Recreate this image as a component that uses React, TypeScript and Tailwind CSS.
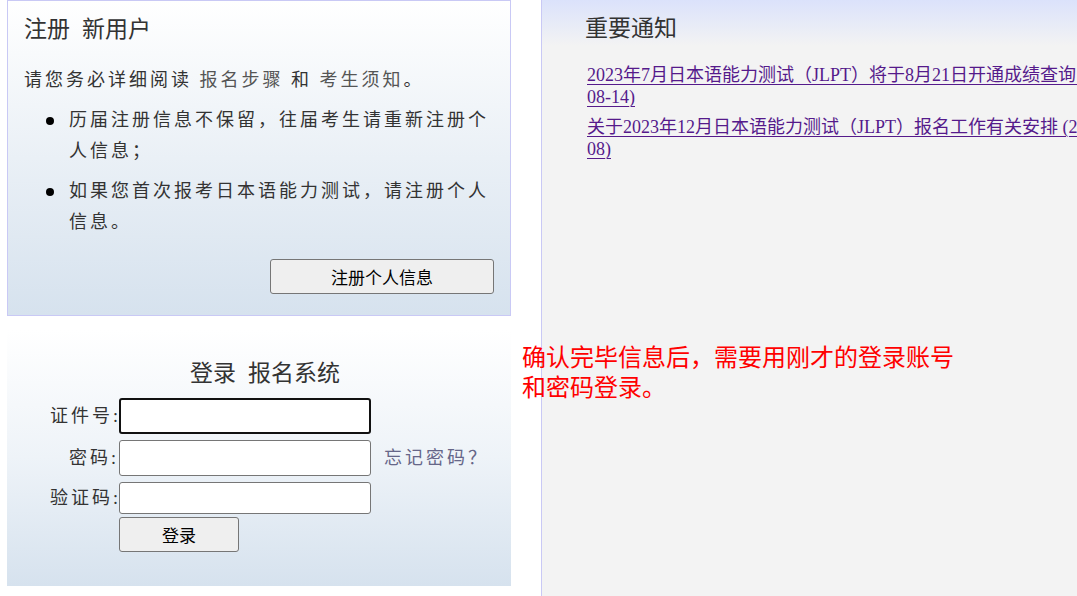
import React from 'react';

const sans = 'font-["Noto_Sans_CJK_SC","Noto_Sans",sans-serif]';
const serif = 'font-["Liberation_Serif","Noto_Sans_CJK_SC",serif]';

function Bullet({ children }: { children: React.ReactNode }) {
  return (
    <li className="flex">
      <span className="w-[45px] shrink-0">
        <span className="ml-[22px] mt-[12px] block h-[8px] w-[8px] rounded-full bg-black" />
      </span>
      <span>{children}</span>
    </li>
  );
}

function RegisterBox() {
  return (
    <div className="h-[316px] border border-[#c9c9f5] bg-gradient-to-b from-white via-[#eaf0f6] to-[#d6e2ee] px-4 pt-[11px]">
      <h2 className={`${sans} text-[23px] leading-[30px] text-[#333]`}>
        <span className="mr-[12px]">注册</span>新用户
      </h2>
      <p className={`${serif} mt-[23px] text-[18px] leading-[31px] tracking-[3px] text-[#333]`}>
        请您务必详细阅读 <a className="text-[#555]">报名步骤</a> 和 <a className="text-[#555]">考生须知</a>。
      </p>
      <ul className={`${serif} mt-[9px] space-y-[9px] text-[18px] leading-[31px] tracking-[3px] text-[#333]`}>
        <Bullet>历届注册信息不保留，往届考生请重新注册个人信息；</Bullet>
        <Bullet>如果您首次报考日本语能力测试，请注册个人信息。</Bullet>
      </ul>
      <div className="mt-[21px] flex justify-end">
        <button className={`${sans} h-[35px] w-[224px] rounded-[3px] border border-[#767676] bg-[#efefef] text-[17px] text-black`}>
          注册个人信息
        </button>
      </div>
    </div>
  );
}

function LoginBox() {
  const label = `${serif} w-[69px] shrink-0 whitespace-nowrap text-right text-[18px] tracking-[3px] text-[#333]`;
  return (
    <div className="mt-[14px] h-[256px] bg-gradient-to-b from-white via-[#eef3f8] to-[#d6e2ee] pl-[43px] pt-[26px]">
      <div className="w-[430px]">
        <h2 className={`${sans} text-center text-[23px] leading-[30px] text-[#333]`}>
          <span className="mr-[12px]">登录</span>报名系统
        </h2>
        <div className="mt-[12px] flex flex-col">
          <div className="flex h-[36px] items-center">
            <span className={label}>证件号:</span>
            <input className="h-[36px] w-[252px] shrink-0 rounded-[3px] border-2 border-[#111] bg-white outline-none" />
          </div>
          <div className="mt-[6px] flex h-[36px] items-center">
            <span className={label}>密码:</span>
            <input type="password" className="h-[36px] w-[252px] shrink-0 rounded-[3px] border border-[#767676] bg-white outline-none" />
            <a className={`${serif} ml-[13px] shrink-0 whitespace-nowrap text-[18px] tracking-[3px] text-[#666688]`}>忘记密码？</a>
          </div>
          <div className="mt-[6px] flex h-[32px] items-center">
            <span className={label}>验证码:</span>
            <input className="h-[32px] w-[252px] shrink-0 rounded-[3px] border border-[#767676] bg-white outline-none" />
          </div>
          <div className="mt-[3px] pl-[69px]">
            <button className={`${sans} h-[35px] w-[120px] rounded-[3px] border border-[#767676] bg-[#efefef] text-[17px] text-black`}>
              登录
            </button>
          </div>
        </div>
      </div>
    </div>
  );
}

function NoticePanel() {
  const link = `${serif} block text-[18px] leading-[22px] whitespace-nowrap text-[#551a8b] underline decoration-1 underline-offset-[3px]`;
  return (
    <div className="ml-[30px] w-[620px] shrink-0 border-l border-[#c9c9f5] bg-[#f3f3f3]">
      <div className="h-[46px] bg-gradient-to-b from-[#dbe2fb] to-[#f3f3f3] pl-[43px] pt-[11px]">
        <h2 className={`${sans} text-[23px] leading-[30px] text-[#333]`}>重要通知</h2>
      </div>
      <div className="mt-[18px] space-y-[8px] pl-[45px]">
        <a className={link}>
          2023年7月日本语能力测试（JLPT）将于8月21日开通成绩查询 (2023-
          <br />
          08-14)
        </a>
        <a className={link}>
          关于2023年12月日本语能力测试（JLPT）报名工作有关安排 (2023-08-
          <br />
          08)
        </a>
      </div>
    </div>
  );
}

export default function App() {
  return (
    <div className="relative h-[596px] w-[1077px] overflow-hidden bg-white">
      <div className="flex h-full">
        <div className="ml-[7px] w-[504px] shrink-0">
          <RegisterBox />
          <LoginBox />
        </div>
        <NoticePanel />
      </div>
      <div className={`${sans} absolute left-[522px] top-[341px] text-[24px] leading-[30px] text-[#ff0000]`}>
        确认完毕信息后，需要用刚才的登录账号
        <br />
        和密码登录。
      </div>
    </div>
  );
}
